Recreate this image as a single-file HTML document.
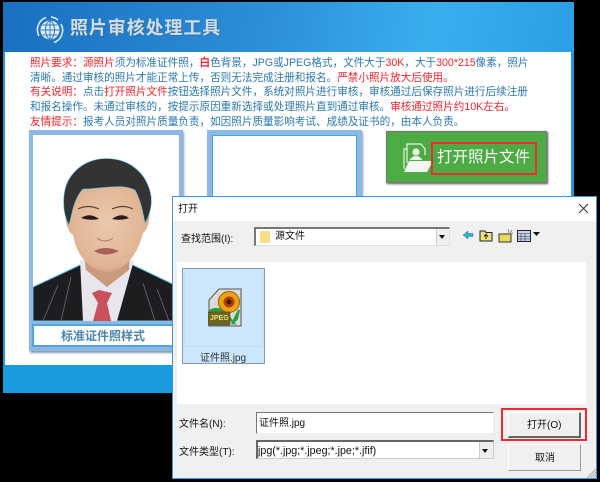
<!DOCTYPE html>
<html lang="zh"><head><meta charset="utf-8"><style>
html,body{margin:0;padding:0;background:#000}
#p{position:relative;width:600px;height:482px;overflow:hidden;background:#000;font-family:"Liberation Sans","Noto Sans CJK SC",sans-serif}
#p div{position:absolute;box-sizing:border-box}
.t{white-space:nowrap;font-size:10.600px;line-height:15px;color:#2a78b0;left:30px;height:15px}
.t b,.r{color:#f5222d;font-weight:400}
.t i{font-style:normal;font-family:"Noto Sans CJK TC",sans-serif}
.d{white-space:nowrap;font-size:10px;line-height:14px;color:#111}
</style></head><body><div id="p">
<div style="left:3px;top:2px;width:571px;height:391px;background:#1b9bdf"></div>
<div style="left:3px;top:2px;width:571px;height:50px;background:linear-gradient(100deg,#1a6fc0 0%,#2b8ed8 45%,#3aaeef 75%,#2a9fe5 100%)"></div>
<div style="left:5px;top:52px;width:566px;height:313px;background:#fff"></div>
<svg style="position:absolute;left:34px;top:14px" width="32" height="32" viewBox="0 0 32 32" fill="none" stroke="#e6eef6"><circle cx="16" cy="16" r="9.500" fill="#e6eef6" stroke="none"/><g stroke="#2b7dc6" stroke-width="1"><ellipse cx="16" cy="16" rx="4.500" ry="9"/><path d="M16 7V25M7 16H25M8.500 11H23.500M8.500 21H23.500"/></g><path d="M5 22A13 13 0 0 1 12 3.500M27 10A13 13 0 0 1 20 28.500M24 6A13 13 0 0 0 17 3" stroke-width="1.500"/></svg>
<div style="left:70px;top:15px;font-size:18px;line-height:26px;font-weight:700;color:#cfdde9;letter-spacing:.9px;white-space:nowrap;text-shadow:1px 1px 1px #3a6f9c">照片审核处理工具</div>
<div class="t" style="top:55px"><b>照片要求<i>：</i>源照片</b>须为标准证件照<i>，</i><b style="font-weight:700">白</b>色背景<i>，</i>JPG或JPEG格式<i>，</i>文件大于<b>30K</b><i>，</i>大于<b>300*215</b>像素<i>，</i>照片</div>
<div class="t" style="top:70px">清晰。通过审核的照片才能正常上传<i>，</i>否则无法完成注册和报名。<b>严禁小照片放大后使用。</b></div>
<div class="t" style="top:84px"><b>有关说明<i>：</i></b>点击<b>打开照片文件</b>按钮选择照片文件<i>，</i>系统对照片进行审核<i>，</i>审核通过后保存照片进行后续注册</div>
<div class="t" style="top:99px">和报名操作。未通过审核的<i>，</i>按提示原因重新选择或处理照片直到通过审核。<b>审核通过照片约10K左右。</b></div>
<div class="t" style="top:114px"><b>友情提示<i>：</i></b>报考人员对照片质量负责<i>，</i>如因照片质量影响考试、成绩及证书的<i>，</i>由本人负责。</div>

<div style="left:29px;top:130px;width:154px;height:221px;background:#8db8e3;box-shadow:1px 2px 2px #8a9aa8"></div>
<div style="left:33px;top:135px;width:146px;height:186px;background:#fff;overflow:hidden">
<svg width="146" height="186" viewBox="0 0 146 186" style="display:block">
<defs><radialGradient id="f" cx=".5" cy=".5" r=".6"><stop offset="0" stop-color="#ecc9ae"/><stop offset=".75" stop-color="#e0b493"/><stop offset="1" stop-color="#c08a62"/></radialGradient></defs>
<path d="M0 152L47 130L100 130L146 152V186H0Z" fill="#1d1d20" stroke="#58c4ea" stroke-width="1"/>
<path d="M47 125L50 186H84L101 125Z" fill="#e6e6ec"/>
<path d="M59 158L66 155L79 158L74 168L78 186H60L65 168Z" fill="#c9505c"/>
<path d="M50 112H97L96 135L74 152L53 135Z" fill="#c99a7c"/>
<path d="M36 68C34 46 52 40 74 40C98 40 114 48 113 70L116 72C118 84 114 96 110 98C104 122 90 137 74 137C58 137 44 122 40 100C35 97 31 86 33 74Z" fill="url(#f)"/>
<path d="M36 90C29 78 29 58 35 46C46 26 66 22 80 24C98 26 112 38 117 56C120 66 118 78 112 88C110 78 108 66 102 55C88 48 70 54 50 54C44 60 40 72 39 78Z" fill="#333334" stroke="#58c4ea" stroke-width=".6"/>
<path d="M45 74Q55 69 66 74" stroke="#5a4436" stroke-width="1.200" fill="none"/><path d="M79 74Q90 69 100 74" stroke="#5a4436" stroke-width="1.200" fill="none"/>
<path d="M48 83Q57 77 66 84Q57 86 48 83Z" fill="#2a1c18"/><path d="M79 84Q88 77 96 83Q88 86 79 84Z" fill="#2a1c18"/>
<path d="M64 103Q72 109 80 103" stroke="#ae7a5c" fill="none"/>
<path d="M61 116Q72 110 86 116Q73 123 61 116Z" fill="#a8605a"/>
<path d="M10 186L25 150M28 186L38 142M122 186L110 148M136 186L124 154" stroke="#77777c" stroke-width=".7"/>
</svg></div>
<div style="left:32px;top:324px;width:148px;height:23px;background:#fff;border:2px solid #4fa5e0"></div>
<div style="left:61px;top:329px;font-size:12px;line-height:15px;font-weight:700;color:#4d86ac;white-space:nowrap">标准证件照样式</div>

<div style="left:207px;top:130px;width:155px;height:70px;background:#8db8e3;box-shadow:1px 2px 2px #8a9aa8"></div>
<div style="left:212px;top:135px;width:145px;height:65px;background:#fff;border:1px solid #2fb0e8"></div>

<div style="left:386px;top:131px;width:161px;height:52px;background:#4cab42;border:1px solid #777;box-shadow:1px 1px 2px #555"></div>
<svg style="position:absolute;left:401px;top:141px" width="32" height="32" viewBox="0 0 32 32" fill="none" stroke="#e8f4e4" stroke-width="1.200"><path d="M3 28V8H6M6 22V3H20L24 8V14"/><circle cx="15" cy="11" r="3" fill="#e8f4e4"/><path d="M9 19Q15 12 21 19" fill="#e8f4e4"/><path d="M3 31L8 20H32L26 31Z" fill="#f2f7ef" stroke="none"/></svg>
<div style="left:431px;top:142px;width:106px;height:33px;border:2px solid #ee2a35"></div>
<div style="left:437px;top:148px;font-size:15.500px;line-height:20px;color:#fff;white-space:nowrap">打开照片文件</div>

<div style="left:172px;top:196px;width:425px;height:283px;background:#f0f0f0;border:1px solid #3f95dd"></div>
<div style="left:173px;top:197px;width:423px;height:24px;background:#fff"></div>
<div class="d" style="left:178px;top:203px">打开</div>
<svg style="position:absolute;left:578px;top:203px" width="12" height="12"><path d="M1 1L10 10M10 1L1 10" stroke="#333" stroke-width="1"/></svg>
<div class="d" style="left:181px;top:233px">查找范围(I):</div>
<div style="left:254px;top:227px;width:196px;height:19px;background:#fff;border:2px solid #777;border-right:1px solid #ddd;border-bottom:1px solid #ddd"></div>
<div style="left:260px;top:231px;width:10px;height:12px;background:#fbdc87;border-radius:1px"></div>
<div class="d" style="left:275px;top:230px">源文件</div>
<div style="left:436px;top:229px;width:13px;height:16px;background:#efefef;border-left:1px solid #ccc"></div>
<div style="left:439px;top:235px;width:0;height:0;border:3.500px solid transparent;border-top:4px solid #111"></div>
<svg style="position:absolute;left:461px;top:228px" width="84" height="16" viewBox="0 0 84 16"><path d="M2 7L7 3V5.500H12V8.500H7V11Z" fill="#28b8d0" stroke="#126" stroke-width=".3"/><path d="M19 3H24L25 4.500H31V13H19Z" fill="#efe07a" stroke="#222"/><path d="M25 11V6.500L23 8.500M25 6.500L27 8.500" stroke="#222" fill="none"/><path d="M38 6H50V14H38Z" fill="#e8d860" stroke="#333"/><path d="M47 1L48 5M51 2L49 5M52 5L49 6" stroke="#888"/><rect x="56.500" y="2.500" width="13" height="11" fill="#c5d4ee" stroke="#223"/><path d="M57 5.500H69M60 6V13M64 6V13M57 8.500H69M57 11H69" stroke="#334" stroke-width=".6"/><path d="M72 4H79L75.500 8Z" fill="#111"/></svg>

<div style="left:177px;top:262px;width:409px;height:142px;background:#fff"></div>
<div style="left:182px;top:268px;width:83px;height:96px;background:#cce6fc;border:1px solid #8a9aa8"></div>
<div style="left:184px;top:270px;width:79px;height:77px;border:1px solid #c4dcef;border-top:0"></div>
<svg style="position:absolute;left:208px;top:288px" width="36" height="40" viewBox="0 0 36 40"><path d="M1 12L11 1H33V38H1Z" fill="#ddd" stroke="#555"/><path d="M4 16H32M4 22H32M10 5V36M16 3V36M26 3V36" stroke="#bbb" stroke-width=".6"/><path d="M1 22C8 18 15 20 20 26L30 39L17 29H1Z" fill="#2ca03c"/><path d="M24 36L31 22L29 31Z" fill="#2ca03c" stroke="#2ca03c" stroke-width="2"/><circle cx="21" cy="14" r="10.500" fill="#e8a510" stroke="#a05c08"/><circle cx="21" cy="14" r="5.500" fill="#b53a10"/><circle cx="21" cy="14" r="2.500" fill="#3a200a"/><rect x="0" y="24" width="22" height="13" fill="#6f6720" stroke="#333" stroke-width=".5"/></svg>
<div style="left:210px;top:314px;font-size:7px;line-height:9px;font-weight:700;color:#ecdf8a;white-space:nowrap">JPEG</div>
<div class="d" style="left:200px;top:352px;color:#333">证件照.jpg</div>

<div class="d" style="left:179px;top:418px">文件名(N):</div>
<div style="left:256px;top:412px;width:238px;height:22px;background:#fff;border:1px solid #777;border-right-color:#eee;border-bottom-color:#eee"></div>
<div class="d" style="left:259px;top:417px">证件照.jpg</div>
<div class="d" style="left:179px;top:446px">文件类型(T):</div>
<div style="left:256px;top:440px;width:238px;height:19px;background:#fff;border:2px solid #666;border-right:1px solid #ccc;border-bottom:1px solid #ccc"></div>
<div class="d" style="left:258px;top:444px;font-size:10.700px">jpg(*.jpg;*.jpeg;*.jpe;*.jfif)</div>
<div style="left:479px;top:442px;width:14px;height:16px;background:#efefef;border-left:1px solid #ccc"></div>
<div style="left:482px;top:449px;width:0;height:0;border:3.500px solid transparent;border-top:4px solid #111"></div>

<div style="left:501px;top:408px;width:86px;height:33px;border:2px solid #ee2a35"></div>
<div style="left:508px;top:412px;width:73px;height:26px;background:#f0f0f0;border:1px solid #fff;border-right:2px solid #666;border-bottom:2px solid #666"></div>
<div class="d" style="left:527px;top:419px">打开(O)</div>
<div style="left:508px;top:444px;width:73px;height:27px;background:#f0f0f0;border:1px solid #fff;border-right:1px solid #999;border-bottom:1px solid #999"></div>
<div class="d" style="left:535px;top:452px">取消</div>
<svg style="position:absolute;left:586px;top:468px" width="10" height="10"><path d="M1 10L10 1M4 10L10 4M7 10L10 7" stroke="#aaa"/></svg>
</div></body></html>
